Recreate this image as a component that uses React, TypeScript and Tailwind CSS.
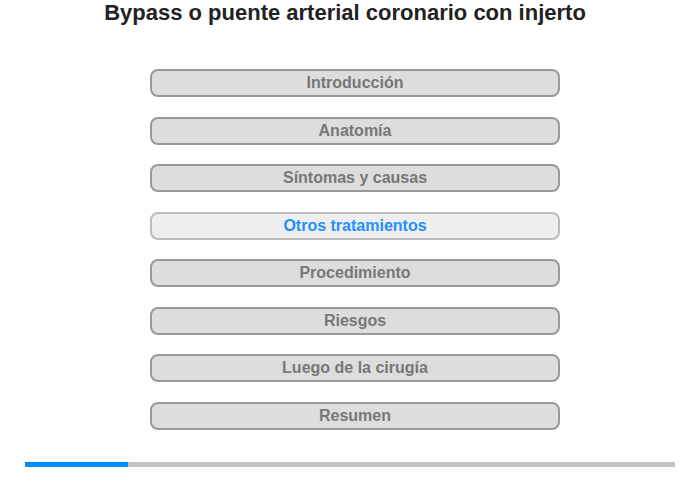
const ITEMS = [
  "Introducción",
  "Anatomía",
  "Síntomas y causas",
  "Otros tratamientos",
  "Procedimiento",
  "Riesgos",
  "Luego de la cirugía",
  "Resumen",
];

const ACTIVE = 3;

export default function App() {
  return (
    <div className="h-[480px] w-[700px] bg-white font-['Liberation_Sans',Arial,sans-serif]">
      <h1 className="pr-[10px] text-center text-[22px] font-bold leading-[26px] text-[#222]">
        Bypass o puente arterial coronario con injerto
      </h1>
      <div className="mt-[43px] flex flex-col items-center gap-[19.5px] pl-[10px]">
        {ITEMS.map((label, i) => (
          <div
            key={label}
            className={
              i === ACTIVE
                ? "flex h-[28px] w-[410px] items-center justify-center rounded-[8px] border-2 border-[#bbb] bg-[#eee] text-[16px] font-bold text-[#1e90ff]"
                : "flex h-[28px] w-[410px] items-center justify-center rounded-[8px] border-2 border-[#999] bg-[#ddd] text-[16px] font-bold text-[#777]"
            }
          >
            {label}
          </div>
        ))}
      </div>
      <div className="mx-[25px] mt-[32px] flex h-[5px] bg-[#c4c4c4]">
        <div className="w-[103px] bg-[#008cff]" />
      </div>
    </div>
  );
}
